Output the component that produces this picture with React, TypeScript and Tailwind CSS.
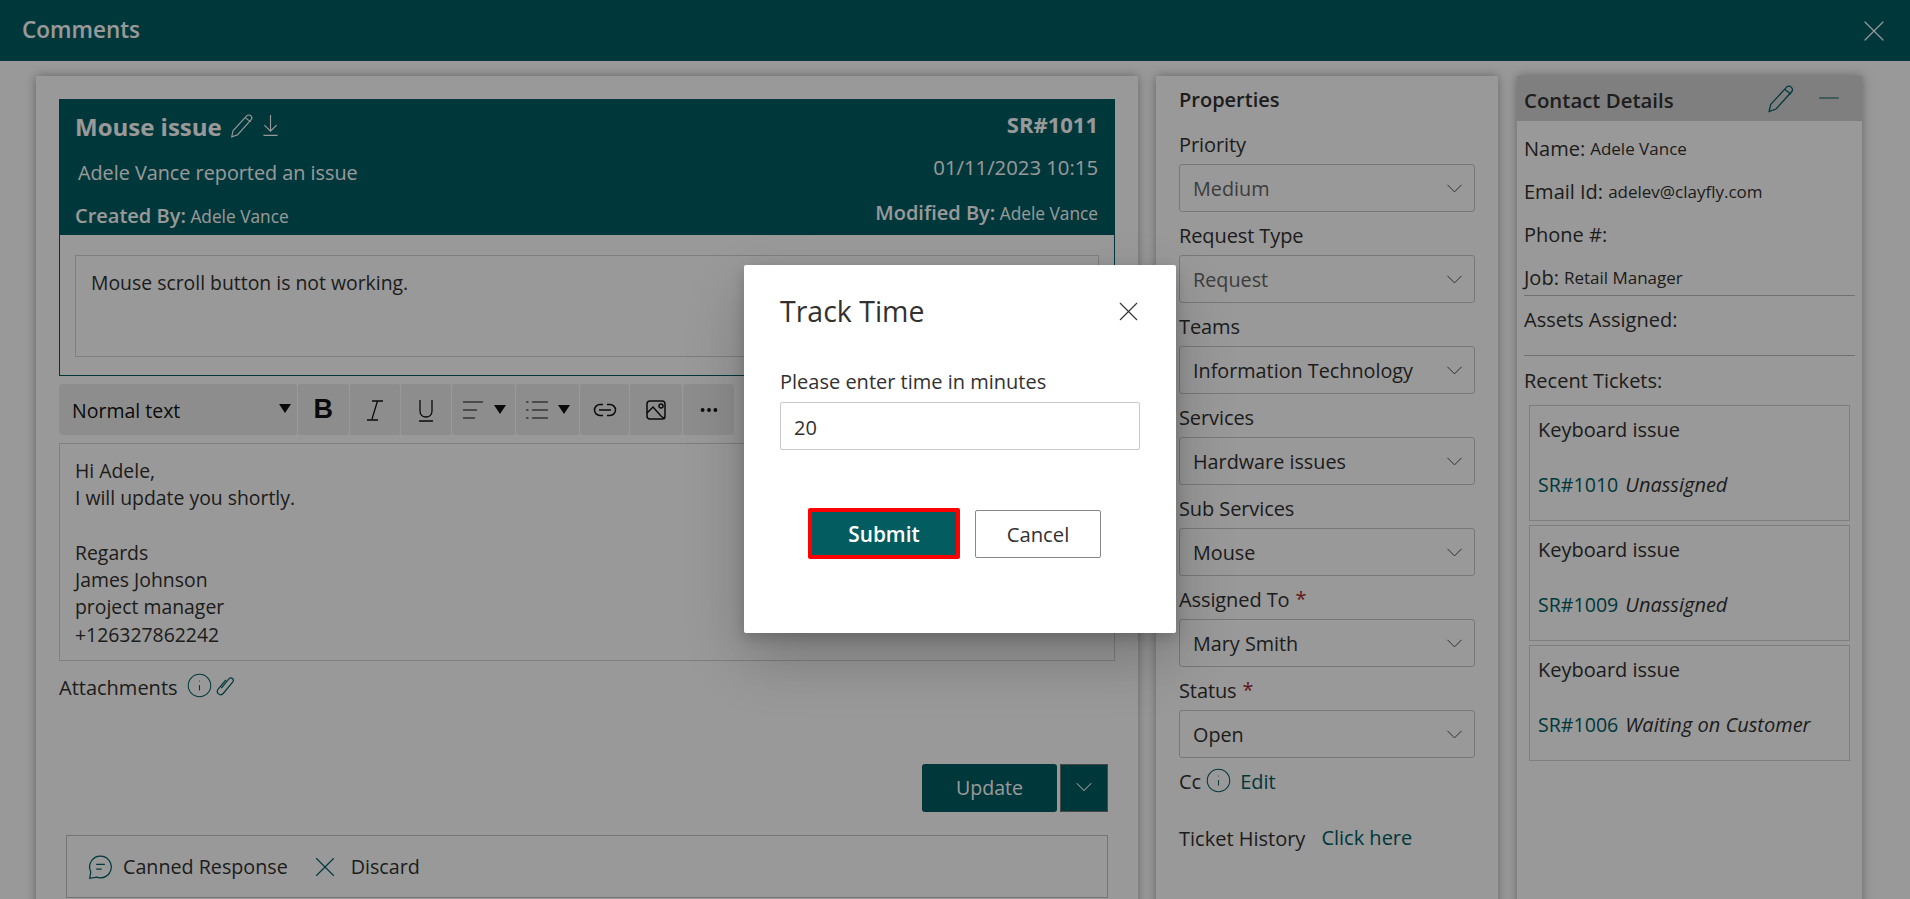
import React from 'react';
import { ChevronDown, X, Minus, Info, Ellipsis } from 'lucide-react';

const properties = [
  { label: 'Priority', value: 'Medium', muted: true },
  { label: 'Request Type', value: 'Request', muted: true },
  { label: 'Teams', value: 'Information Technology' },
  { label: 'Services', value: 'Hardware issues' },
  { label: 'Sub Services', value: 'Mouse' },
  { label: 'Assigned To', value: 'Mary Smith', required: true },
  { label: 'Status', value: 'Open', required: true },
];

const tickets = [
  { id: 'SR#1010', status: 'Unassigned' },
  { id: 'SR#1009', status: 'Unassigned' },
  { id: 'SR#1006', status: 'Waiting on Customer' },
];

const contact = [
  { label: 'Name:', value: 'Adele Vance' },
  { label: 'Email Id:', value: 'adelev@clayfly.com' },
  { label: 'Phone #:', value: '' },
  { label: 'Job:', value: 'Retail Manager' },
];

const Pencil: React.FC<{ className?: string }> = ({ className }) => (
  <svg viewBox="0 0 24 24" fill="none" stroke="currentColor" strokeWidth="1" className={className}>
    <path d="M16.500 2.500c1-1 2.800-1 3.800.2 1 1 1 2.600 0 3.700L8 20l-5.500 2 1.200-5.600z" />
    <path d="M15 4.200l5 4" />
  </svg>
);

const Clip: React.FC<{ className?: string }> = ({ className }) => (
  <svg viewBox="0 0 24 24" fill="none" stroke="currentColor" strokeWidth="1.300" className={className}>
    <path d="M8 15.500l8-10c1.200-1.500 3-1.600 4.100-.6 1.200 1 1.300 2.700.2 4.100l-10 12c-1.500 1.700-3.800 2-5.400.7-1.600-1.300-1.700-3.500-.3-5.300l8.400-10" />
  </svg>
);

const Tool: React.FC<{ w: string; children?: React.ReactNode }> = ({ w, children }) => (
  <div className={`${w} h-full bg-[#ececec] flex items-center justify-center gap-[9px] rounded-[2px] text-[#111]`}>{children}</div>
);

const Caret = () => <div className="w-0 h-0 border-x-[6px] border-x-transparent border-t-[9px] border-t-[#111]" />;

export default function App() {
  return (
    <div className="relative w-[1910px] h-[899px] overflow-hidden bg-white text-[#323130] font-['Open_Sans',sans-serif]">
      {/* Top bar */}
      <div className="h-[61px] bg-[#005d63] flex items-center justify-between pl-[22px] pr-[18px] text-white">
        <span className="text-[22.500px] font-semibold -mt-[2px]">Comments</span>
        <X className="w-[36px] h-[36px]" strokeWidth={0.800} />
      </div>

      <div className="flex h-[838px] pt-[15px] pl-[36px] gap-[18px]">
        {/* Ticket column */}
        <div className="w-[1102px] h-[900px] bg-white shadow-[0_0_10px_rgba(0,0,0,0.35)] pt-[23px] pl-[23px] pr-[23px]">
          <div className="bg-[#005d63] h-[136px] text-white pl-[16px] pr-[17px] flex flex-col">
            <div className="flex items-center justify-between h-[56px]">
              <div className="flex items-center">
                <span className="text-[24px] font-bold">Mouse issue</span>
                <Pencil className="w-[26px] h-[26px] ml-[7px] -mt-[3px]" />
                <svg viewBox="0 0 18 24" className="w-[17px] h-[23px] ml-[7px] -mt-[3px]" fill="none" stroke="currentColor" strokeWidth="1.200">
                  <path d="M9 1v17M2.500 11.500L9 18l6.500-6.500M1.500 22.500h15" />
                </svg>
              </div>
              <span className="text-[22px] font-bold -mt-[6px]">SR#1011</span>
            </div>
            <div className="flex items-center justify-between h-[36px] pl-[3px]">
              <span className="text-[19.800px]">Adele Vance reported an issue</span>
              <span className="text-[20.300px] -mt-[12px]">01/11/2023 10:15</span>
            </div>
            <div className="flex items-center justify-between flex-1 text-[17.300px]">
              <span className="mt-[6px]"><b className="text-[20px] font-semibold">Created By:</b> Adele Vance</span>
              <span className="-mt-[1px]"><b className="text-[20px] font-semibold">Modified By:</b> Adele Vance</span>
            </div>
          </div>
          <div className="h-[141px] border-x border-b border-[#005d63] pt-[20px] px-[15px]">
            <div className="h-[102px] border border-[#d2d2d2] px-[15px] pt-[14px] text-[19.400px] leading-[26px]">
              Mouse scroll button is not working.
            </div>
          </div>

          {/* Editor toolbar */}
          <div className="w-[675px] h-[51px] mt-[8px] flex gap-[1px] rounded-[4px] overflow-hidden text-[19.500px]">
            <Tool w="w-[239px] justify-between pl-[13px] pr-[6px]">
              <span className="w-full mt-[2px]">Normal text</span>
              <div className="shrink-0 -mt-[3px]"><Caret /></div>
            </Tool>
            <Tool w="w-[51px]"><span className="text-[27px] font-bold font-['Liberation_Sans',sans-serif]">B</span></Tool>
            <Tool w="w-[50px]">
              <svg viewBox="0 0 24 24" className="w-[24px] h-[24px]" fill="none" stroke="currentColor" strokeWidth="1.300"><path d="M9 3h11M14.500 3L9 21M4 22h11" /></svg>
            </Tool>
            <Tool w="w-[51px]">
              <svg viewBox="0 0 24 24" className="w-[24px] h-[24px]" fill="none" stroke="currentColor" strokeWidth="1.300"><path d="M6 2v11c0 8 12 8 12 0V2M5 23h14" /></svg>
            </Tool>
            <Tool w="w-[63px]">
              <svg viewBox="0 0 24 24" className="w-[24px] h-[24px]" fill="none" stroke="currentColor" strokeWidth="1.200"><path d="M2 4h20M2 12h14M2 20h12" /></svg>
              <Caret />
            </Tool>
            <Tool w="w-[63px]">
              <svg viewBox="0 0 24 24" className="w-[24px] h-[24px]" fill="none" stroke="currentColor" strokeWidth="1.200"><path d="M7 4h16M7 12h16M7 20h16M1 4h2.500M1 12h2.500M1 20h2.500" /></svg>
              <Caret />
            </Tool>
            <Tool w="w-[50px]">
              <svg viewBox="0 0 26 24" className="w-[26px] h-[24px]" fill="none" stroke="currentColor" strokeWidth="1.500"><path d="M11 6.500H8a5.500 5.500 0 0 0 0 11h3M15 6.500h3a5.500 5.500 0 0 1 0 11h-3M7 12h12" /></svg>
            </Tool>
            <Tool w="w-[52px]">
              <svg viewBox="0 0 24 24" className="w-[24px] h-[24px]" fill="none" stroke="currentColor" strokeWidth="1.500"><rect x="3" y="3" width="18" height="18" rx="3" /><path d="M3 15l6-6 8 9 4 3M15 8a2 2 0 1 0 4 0 2 2 0 0 0-4 0" /></svg>
            </Tool>
            <Tool w="w-[51px]"><Ellipsis className="w-[22px] h-[22px]" strokeWidth={2.200} /></Tool>
          </div>

          <div className="mt-[8px] h-[218px] border border-[#d2d2d2] pl-[15px] pt-[13px] text-[19.400px] leading-[27.300px]">
            <div>Hi Adele,</div>
            <div>I will update you shortly.</div>
            <div className="h-[27.300px]" />
            <div>Regards</div>
            <div>James Johnson</div>
            <div>project manager</div>
            <div>+126327862242</div>
          </div>

          <div className="flex items-center h-[36px] mt-[9px] text-[20px] font-medium">
            Attachments
            <Info className="w-[27px] h-[27px] ml-[8px] -mt-[6px] text-[#005d63]" strokeWidth={0.900} />
            <Clip className="w-[22px] h-[22px] ml-[1px] -mt-[6px] text-[#005d63]" />
          </div>

          <div className="flex justify-end gap-[3px] mt-[58px] pr-[7px]">
            <div className="w-[135px] h-[48px] bg-[#005d63] text-white rounded-[3px] flex items-center justify-center text-[19.600px]">Update</div>
            <div className="w-[48px] h-[48px] bg-[#005d63] border border-[#777] text-white flex items-center justify-center">
              <ChevronDown className="w-[28px] h-[28px] -mt-[2px]" strokeWidth={0.900} />
            </div>
          </div>

          <div className="ml-[7px] mr-[7px] mt-[23px] h-[63px] border border-[#c4c4c4] flex items-center pl-[20px] text-[19.700px]">
            <svg viewBox="0 0 24 24" className="w-[26px] h-[26px] text-[#005d63]" fill="none" stroke="currentColor" strokeWidth="1.100">
              <path d="M12.500 2a10 10 0 1 1-3.500 19.400L2.500 22.500l1-6A10 10 0 0 1 12.500 2z" />
              <path d="M8.500 9.500h8M8.500 14h5" />
            </svg>
            <span className="ml-[10px]">Canned Response</span>
            <X className="w-[34px] h-[34px] ml-[20px] text-[#005d63]" strokeWidth={0.800} />
            <span className="ml-[9px]">Discard</span>
          </div>
        </div>

        {/* Properties column */}
        <div className="w-[342px] h-[900px] bg-white shadow-[0_0_10px_rgba(0,0,0,0.35)] pl-[23px] pr-[23px]">
          <div className="h-[45px] pt-[10px] leading-[28px] text-[20px] font-semibold">Properties</div>
          {properties.map((p) => (
            <div key={p.label}>
              <div className="h-[43px] flex items-center text-[20px] tracking-[-0.1px]">
                <span className="mt-[4px]">{p.label}</span>
                {p.required && <span className="text-[#a4262c] ml-[6px] mt-[2px]">*</span>}
              </div>
              <div className={`h-[48px] border border-[#c8c8c8] rounded-[3px] flex items-center justify-between pl-[13px] pr-[6px] text-[19.800px] ${p.muted ? 'text-[#666]' : ''}`}>
                <span className="mt-[2px]">{p.value}</span>
                <ChevronDown className="w-[27px] h-[27px] text-[#444]" strokeWidth={0.850} />
              </div>
            </div>
          ))}
          <div className="h-[48px] flex items-center text-[20px]">
            Cc
            <Info className="w-[27px] h-[27px] ml-[4px] -mt-[3px] text-[#005d63]" strokeWidth={0.900} />
            <span className="ml-[8px] text-[#005d63]">Edit</span>
          </div>
          <div className="h-[66px] flex items-center text-[20px]">
            Ticket History
            <span className="ml-[16px] text-[#005d63] -mt-[2px]">Click here</span>
          </div>
        </div>

        {/* Contact column */}
        <div className="ml-[1px] w-[345px] h-[900px] bg-white shadow-[0_0_10px_rgba(0,0,0,0.35)]">
          <div className="h-[45px] bg-[#d4d4d4] flex items-center justify-between pl-[7px] pr-[17px]">
            <span className="text-[20.400px] font-semibold mt-[4px]">Contact Details</span>
            <div className="flex items-center gap-[17px] text-[#005d63]">
              <Pencil className="w-[30px] h-[30px]" />
              <Minus className="w-[32px] h-[32px] -mt-[2px]" strokeWidth={0.800} />
            </div>
          </div>
          <div className="pl-[7px] pr-[7px]">
            <div className="pt-[6px] border-b border-[#bbb] h-[175px]">
              {contact.map((c) => (
                <div key={c.label} className="h-[43px] flex items-center text-[20px]">
                  <span>{c.label}</span>
                  <span className="ml-[5px] text-[17px] mt-[1px]">{c.value}</span>
                </div>
              ))}
            </div>
            <div className="h-[60px] border-b border-[#bbb] pt-[10px] leading-[28px] text-[20px] font-medium">Assets Assigned:</div>
            <div className="h-[49px] flex items-center text-[20px] font-medium">Recent Tickets:</div>
            <div className="flex flex-col gap-[4px] ml-[5px] mr-[5px]">
              {tickets.map((t) => (
                <div key={t.id} className="h-[116px] border border-[#d2d2d2] pl-[8px] pt-[11px] text-[20px]">
                  <div className="leading-[26px]">Keyboard issue</div>
                  <div className="mt-[29px] leading-[26px]">
                    <span className="text-[#005d63] text-[19.600px]">{t.id}</span>
                    <span className="italic ml-[7px]">{t.status}</span>
                  </div>
                </div>
              ))}
            </div>
          </div>
        </div>
      </div>

      {/* Modal scrim */}
      <div className="absolute inset-0 bg-black/40" />

      {/* Track Time dialog */}
      <div className="absolute left-[744px] top-[265px] w-[432px] h-[368px] bg-white rounded-[2px] shadow-[0_26px_58px_rgba(0,0,0,0.22),0_5px_14px_rgba(0,0,0,0.18)] pl-[36px] pr-[36px] pt-[27px]">
        <div className="flex items-center justify-between h-[38px]">
          <span className="text-[28.500px] font-medium text-[#323130]">Track Time</span>
          <X className="w-[33px] h-[33px] -mr-[5px] text-[#323130]" strokeWidth={0.800} />
        </div>
        <div className="mt-[39px] text-[20px] leading-[26px]">Please enter time in minutes</div>
        <div className="mt-[7px] h-[48px] border border-[#c8c8c8] rounded-[2px] flex items-center pl-[13px] text-[20px]">
          <span className="mt-[3px]">20</span>
        </div>
        <div className="flex items-center mt-[58px] ml-[28px] gap-[15px]">
          <div className="w-[152px] h-[51px] bg-[#035c60] border-[4px] border-[#ff0000] rounded-[2px] text-white font-semibold text-[20.800px] flex items-center justify-center">
            <span className="mt-[2px]">Submit</span>
          </div>
          <div className="w-[126px] h-[48px] border border-[#8a8886] rounded-[2px] text-[20.300px] flex items-center justify-center">
            <span className="mt-[2px]">Cancel</span>
          </div>
        </div>
      </div>
    </div>
  );
}
